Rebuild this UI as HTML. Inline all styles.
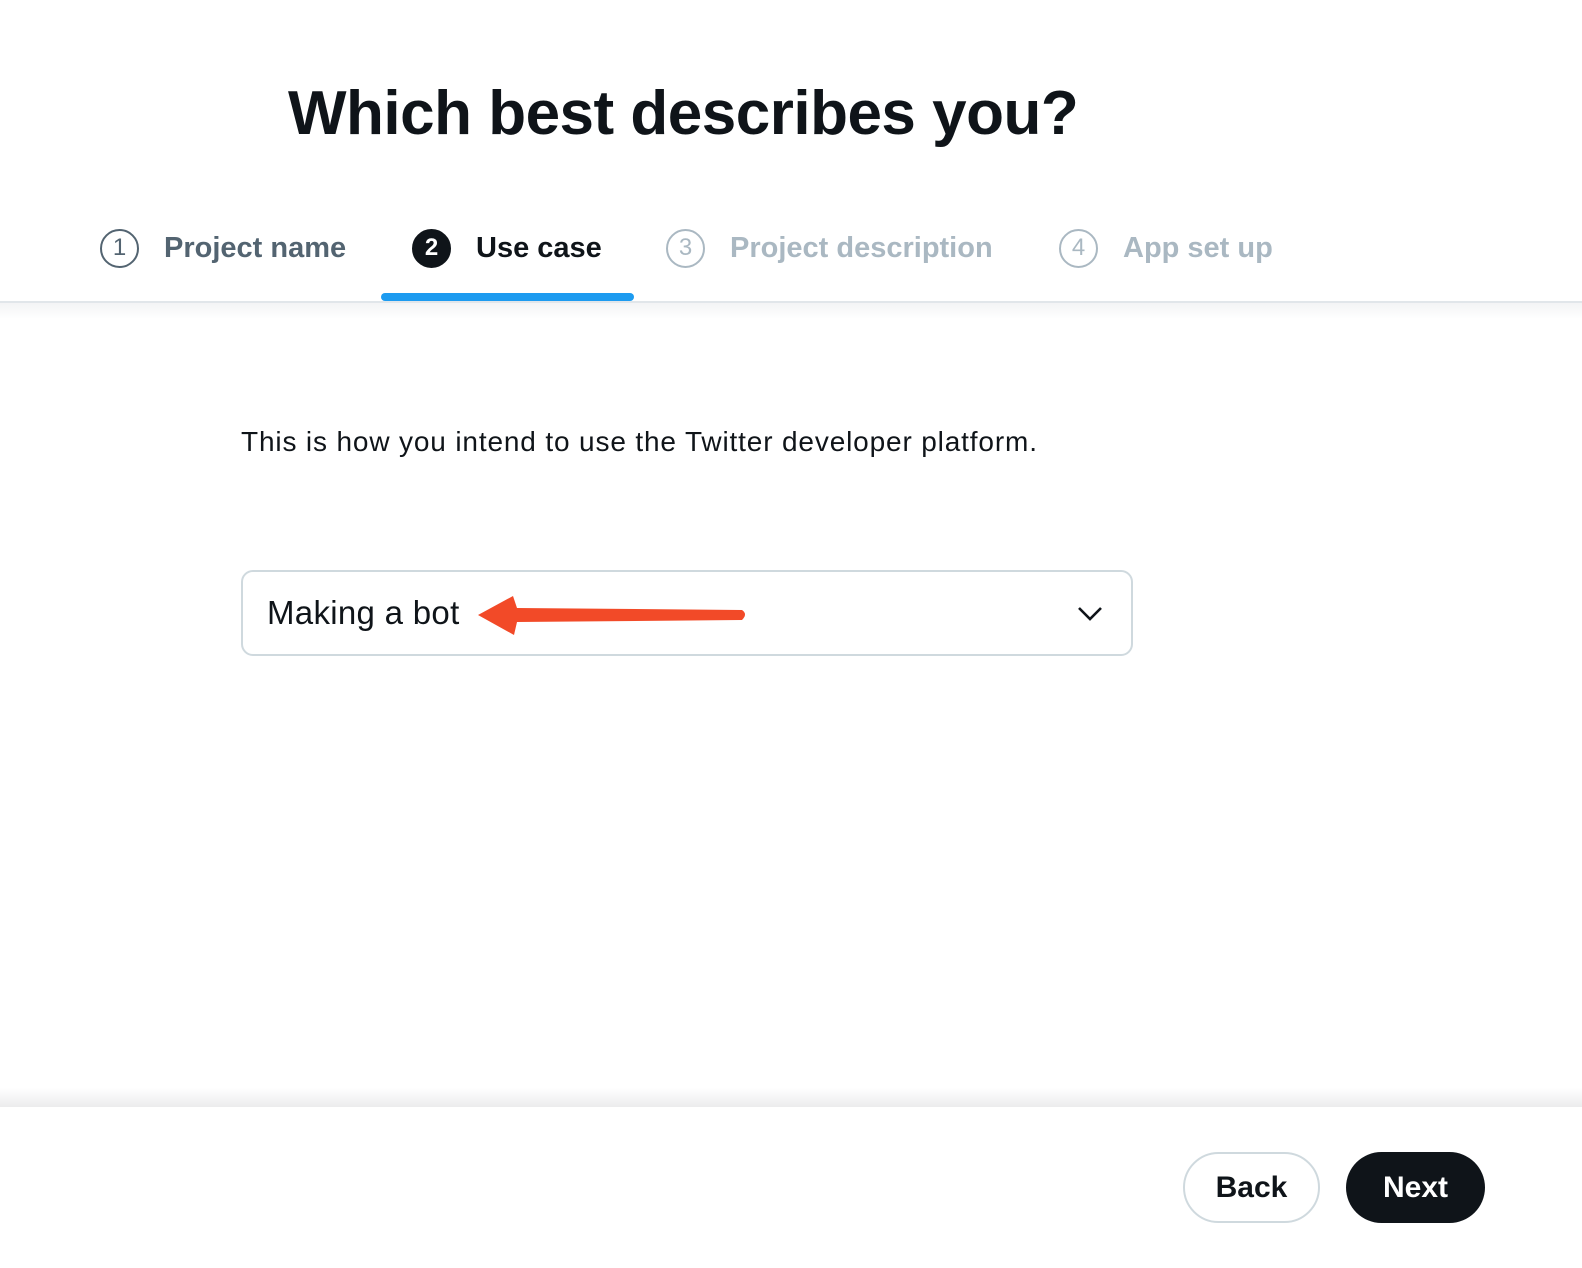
<!DOCTYPE html>
<html><head><meta charset="utf-8"><style>
*{margin:0;padding:0;box-sizing:border-box}
body{width:1582px;height:1268px;background:#fff;font-family:"Liberation Sans",Arial,sans-serif;position:relative;overflow:hidden;color:#0f1419}
.abs{position:absolute;white-space:nowrap}
h1{position:absolute;left:288px;top:78px;font-size:62px;font-weight:bold;letter-spacing:-0.5px;color:#0f1419}
.tab{position:absolute;top:228px;height:40px;display:flex;align-items:center;font-size:29px;font-weight:bold}
.c{width:39px;height:39px;border-radius:50%;border:2px solid;display:flex;align-items:center;justify-content:center;font-size:24px;margin-right:25px;font-weight:normal}
.btn{position:absolute;top:1152px;height:71px;border-radius:36px;display:flex;align-items:center;justify-content:center;font-size:30px;font-weight:bold}
</style></head><body>
<h1>Which best describes you?</h1>
<div class="tab" style="left:100px;color:#536471"><div class="c" style="border-color:#536471">1</div>Project name</div>
<div class="tab" style="left:412px;color:#0f1419"><div class="c" style="background:#0f1419;border-color:#0f1419;color:#fff;font-weight:bold">2</div>Use case</div>
<div class="tab" style="left:666px;color:#aab8c2"><div class="c" style="border-color:#aab8c2">3</div>Project description</div>
<div class="tab" style="left:1059px;color:#aab8c2"><div class="c" style="border-color:#aab8c2">4</div>App set up</div>
<div class="abs" style="left:381px;top:293px;width:253px;height:8px;background:#1d9bf0;border-radius:4px"></div>
<div class="abs" style="left:0;top:301px;width:1582px;height:2px;background:#e1e6ea"></div>
<div class="abs" style="left:0;top:303px;width:1582px;height:16px;background:linear-gradient(#f3f4f5,#fff)"></div>
<div class="abs" style="left:241px;top:426px;font-size:28px;letter-spacing:0.85px;color:#0f1419">This is how you intend to use the Twitter developer platform.</div>
<div class="abs" style="left:241px;top:570px;width:892px;height:86px;border:2px solid #cfd9de;border-radius:12px"></div>
<div class="abs" style="left:267px;top:594px;font-size:33px;letter-spacing:0.3px">Making a bot</div>
<svg class="abs" style="left:470px;top:590px" width="290" height="50" viewBox="0 0 290 50"><path d="M8 25 L43 6 L47 18 L272 20 Q278 24 272 30 L47 32 L44 45 Z" fill="#f24a28"/></svg>
<svg class="abs" style="left:1076px;top:604px" width="28" height="20" viewBox="0 0 28 20"><path d="M3 4 L14 15 L25 4" fill="none" stroke="#0f1419" stroke-width="2.6"/></svg>
<div class="abs" style="left:0;top:1088px;width:1582px;height:19px;background:linear-gradient(#fff,#ececed)"></div>
<div class="btn" style="left:1183px;width:137px;border:2px solid #cfd9de;color:#0f1419">Back</div>
<div class="btn" style="left:1346px;width:139px;background:#0f1419;color:#fff">Next</div>
</body></html>
